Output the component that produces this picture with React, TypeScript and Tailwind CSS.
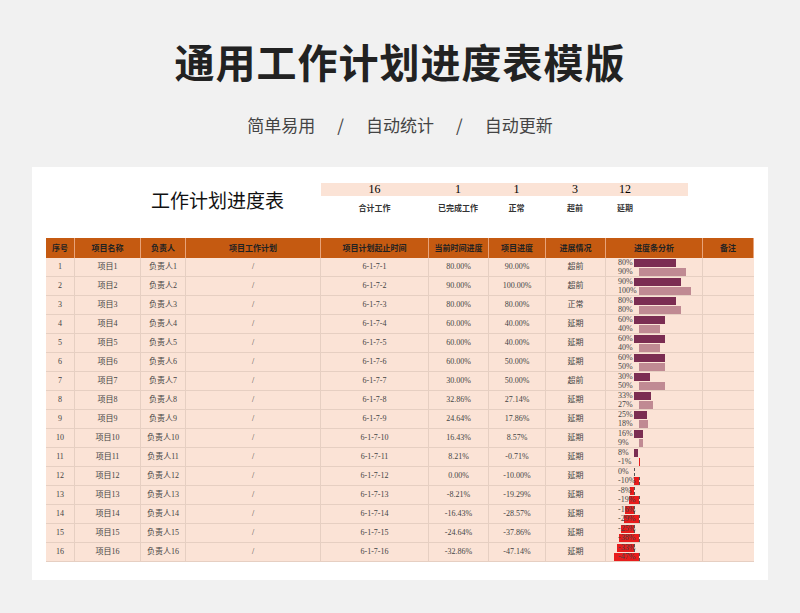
const rows = [
  [80, 90, "超前"], [90, 100, "超前"], [80, 80, "正常"], [60, 40, "延期"], [60, 40, "延期"], [60, 50, "延期"],
  [30, 50, "超前"], [32.86, 27.14, "延期"], [24.64, 17.86, "延期"], [16.43, 8.57, "延期"], [8.21, -0.71, "延期"],
  [0, -10, "延期"], [-8.21, -19.29, "延期"], [-16.43, -28.57, "延期"], [-24.64, -37.86, "延期"], [-32.86, -47.14, "延期"],
] as [number, number, string][];

const cols = ["w-[29px]", "w-[66px]", "w-[45px]", "w-[135px]", "w-[108px]", "w-[60px]", "w-[57px]", "w-[60px]", "w-[97px]", "w-[51px]"];
const heads = ["序号", "项目名称", "负责人", "项目工作计划", "项目计划起止时间", "当前时间进度", "项目进度", "进展情况", "进度条分析", "备注"];

function Bar({ v, axis, dark }: { v: number; axis: number; dark: boolean }) {
  const w = Math.abs(v) * 0.52;
  const neg = v < 0;
  const color = neg ? "#e81c1c" : dark ? "#7b2d52" : "#c08a93";
  return (
    <div className="relative h-[9px]">
      <span className="absolute top-0 text-[8px] leading-[9px] left-[12px] z-10 text-[#444]">{Math.round(v)}%</span>
      <div className="absolute top-[1px] h-[8px] border-l border-dashed border-[#555]" style={{ left: axis }} />
      <div className="absolute top-[1px] h-[8px]" style={{ left: neg ? axis - w : axis, width: w, background: color }} />
    </div>
  );
}

export default function App() {
  const f = { fontFamily: '"Liberation Serif","Noto Sans CJK SC",serif' };
  return (
    <div className="w-[800px] h-[613px] bg-[#f1f1f1] flex flex-col items-center" style={{ fontFamily: '"Noto Sans CJK SC",sans-serif' }}>
      <h1 className="mt-[33px] text-[40px] font-bold leading-[56px] text-[#222] tracking-[1px]">通用工作计划进度表模版</h1>
      <div className="mt-[24px] text-[17px] text-[#444] leading-[24px] flex gap-[22px]">
        <span>简单易用</span><span>/</span><span>自动统计</span><span>/</span><span>自动更新</span>
      </div>
      <div className="mt-[30px] w-[736px] h-[413px] bg-white self-start ml-[32px] pt-[16px] pl-[14px]" style={f}>
        <div className="flex h-[55px]">
          <div className="w-[275px] flex justify-center items-start pl-[68px] pt-[3px] text-[19px] text-[#111]" style={{ fontFamily: '"Noto Sans CJK SC",sans-serif' }}>工作计划进度表</div>
          <div className="w-[367px] relative">
            <div className="h-[13px] bg-[#fbe3d6]" />
            <div className="absolute inset-0 flex">
              {[["16", "合计工作", 107], ["1", "已完成工作", 60], ["1", "正常", 57], ["3", "超前", 60], ["12", "延期", 40]].map(([n, l, w], i) => (
                <div key={i} className="flex flex-col items-center" style={{ width: w as number }}>
                  <span className="text-[12px] leading-[13px]">{n}</span>
                  <span className="mt-[6px] text-[8px] font-bold text-[#333]" style={{ fontFamily: '"Noto Sans CJK SC",sans-serif' }}>{l}</span>
                </div>
              ))}
            </div>
          </div>
        </div>
        <div className="w-[708px] text-[8px] text-[#444]">
          <div className="flex h-[20px] bg-[#c55a11] text-[#222] font-bold" style={{ fontFamily: '"Noto Sans CJK SC",sans-serif' }}>
            {heads.map((h, i) => (
              <div key={i} className={`${cols[i]} flex items-center justify-center border-r border-[#e8a37a]`}>{h}</div>
            ))}
          </div>
          {rows.map(([a, b, s], r) => (
            <div key={r} className="flex h-[19px] bg-[#fbe3d6] border-b border-[#e6cfc2]">
              {[String(r + 1), `项目${r + 1}`, `负责人${r + 1}`, "/", `6-1-7-${r + 1}`, `${a.toFixed(2)}%`, `${b.toFixed(2)}%`, s].map((t, i) => (
                <div key={i} className={`${cols[i]} flex items-center justify-center border-r border-[#e6cfc2]`}>{t}</div>
              ))}
              <div className={`${cols[8]} border-r border-[#e6cfc2] flex flex-col justify-center`}>
                <Bar v={a} axis={28} dark />
                <Bar v={b} axis={33} dark={false} />
              </div>
              <div className={cols[9]} />
            </div>
          ))}
        </div>
      </div>
    </div>
  );
}
